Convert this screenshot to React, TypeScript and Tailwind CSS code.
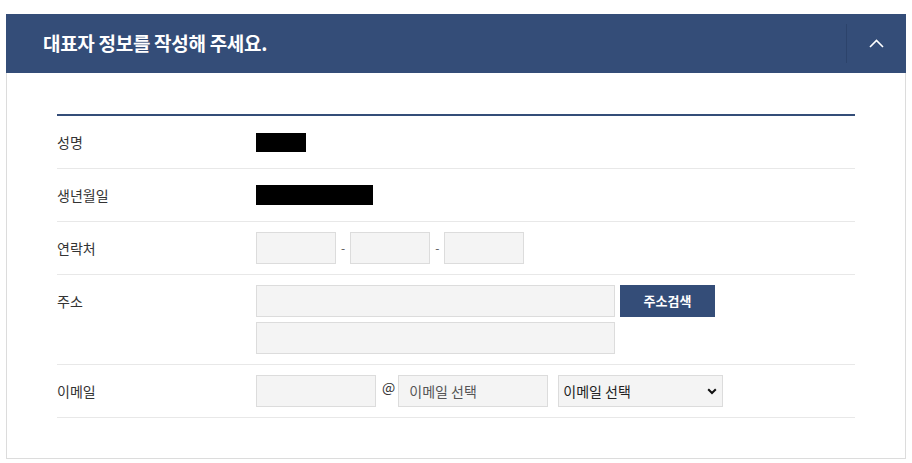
import React from "react";

const font = { fontFamily: '"Noto Sans CJK KR", "Noto Sans", sans-serif' };

type RowProps = { label: string; top?: boolean; children: React.ReactNode };

function Row({ label, top, children }: RowProps) {
  return (
    <div className="grid grid-cols-[199px_1fr] border-b border-[#e8e8e8] py-[10px]">
      <div
        className={
          "flex h-[32px] items-center text-[14px] text-[#333] " +
          (top ? "" : "self-center")
        }
      >
        {label}
      </div>
      <div className="flex min-h-[32px] flex-col justify-center">{children}</div>
    </div>
  );
}

const inputCls =
  "h-[32px] border border-[#dcdcdc] bg-[#f4f4f4] px-[10px] text-[14px] text-[#555] placeholder:text-[#555] outline-none";

function App() {
  return (
    <div className="min-h-screen bg-white pt-[14px]" style={font}>
      <div className="mx-[6px]">
        <div className="flex h-[59px] items-center bg-[#344d78]">
          <h2 className="flex-1 pl-[37px] text-[19px] font-bold tracking-[-0.3px] text-white">
            대표자 정보를 작성해 주세요.
          </h2>
          <div className="h-[39px] w-px bg-[#2c436b]" />
          <button className="flex h-full w-[59px] items-center justify-center">
            <svg width="15" height="9" viewBox="0 0 15 9" fill="none">
              <path d="M1 8L7.5 1.5L14 8" stroke="white" strokeWidth="1.6" />
            </svg>
          </button>
        </div>

        <div className="border border-t-0 border-[#dcdcdc] px-[50px] pb-[40px] pt-[41px]">
          <div className="border-t-2 border-[#344d78]">
            <Row label="성명">
              <div className="h-[19px] w-[50px] bg-black" />
            </Row>
            <Row label="생년월일">
              <div className="h-[20px] w-[117px] bg-black" />
            </Row>
            <Row label="연락처">
              <div className="flex items-center">
                <input className={inputCls + " w-[80px]"} />
                <span className="mx-[5px] text-[12px] text-[#555]">-</span>
                <input className={inputCls + " w-[80px]"} />
                <span className="mx-[5px] text-[12px] text-[#555]">-</span>
                <input className={inputCls + " w-[80px]"} />
              </div>
            </Row>
            <Row label="주소" top>
              <div className="flex flex-col gap-[5px]">
                <div className="flex items-center gap-[5px]">
                  <input className={inputCls + " w-[359px]"} />
                  <button className="h-[32px] w-[95px] bg-[#344d78] text-[13px] font-bold text-white">
                    주소검색
                  </button>
                </div>
                <input className={inputCls + " w-[359px]"} />
              </div>
            </Row>
            <Row label="이메일">
              <div className="flex items-center">
                <input className={inputCls + " w-[120px]"} />
                <span className="ml-[6px] mr-[3px] -translate-y-[4px] text-[14px] text-[#333]">@</span>
                <input className={inputCls + " w-[150px]"} placeholder="이메일 선택" />
                <div className="relative ml-[10px]">
                  <select className="h-[32px] w-[165px] appearance-none border border-[#dcdcdc] bg-[#f4f4f4] pl-[4px] text-[14px] text-[#222] outline-none">
                    <option>이메일 선택</option>
                    <option>naver.com</option>
                    <option>gmail.com</option>
                  </select>
                  <svg
                    className="pointer-events-none absolute right-[6px] top-[13px]"
                    width="10"
                    height="7"
                    viewBox="0 0 10 7"
                    fill="none"
                  >
                    <path d="M1.2 1.2L5 5L8.8 1.2" stroke="#111" strokeWidth="2" />
                  </svg>
                </div>
              </div>
            </Row>
          </div>
        </div>
      </div>
    </div>
  );
}

export default App;
